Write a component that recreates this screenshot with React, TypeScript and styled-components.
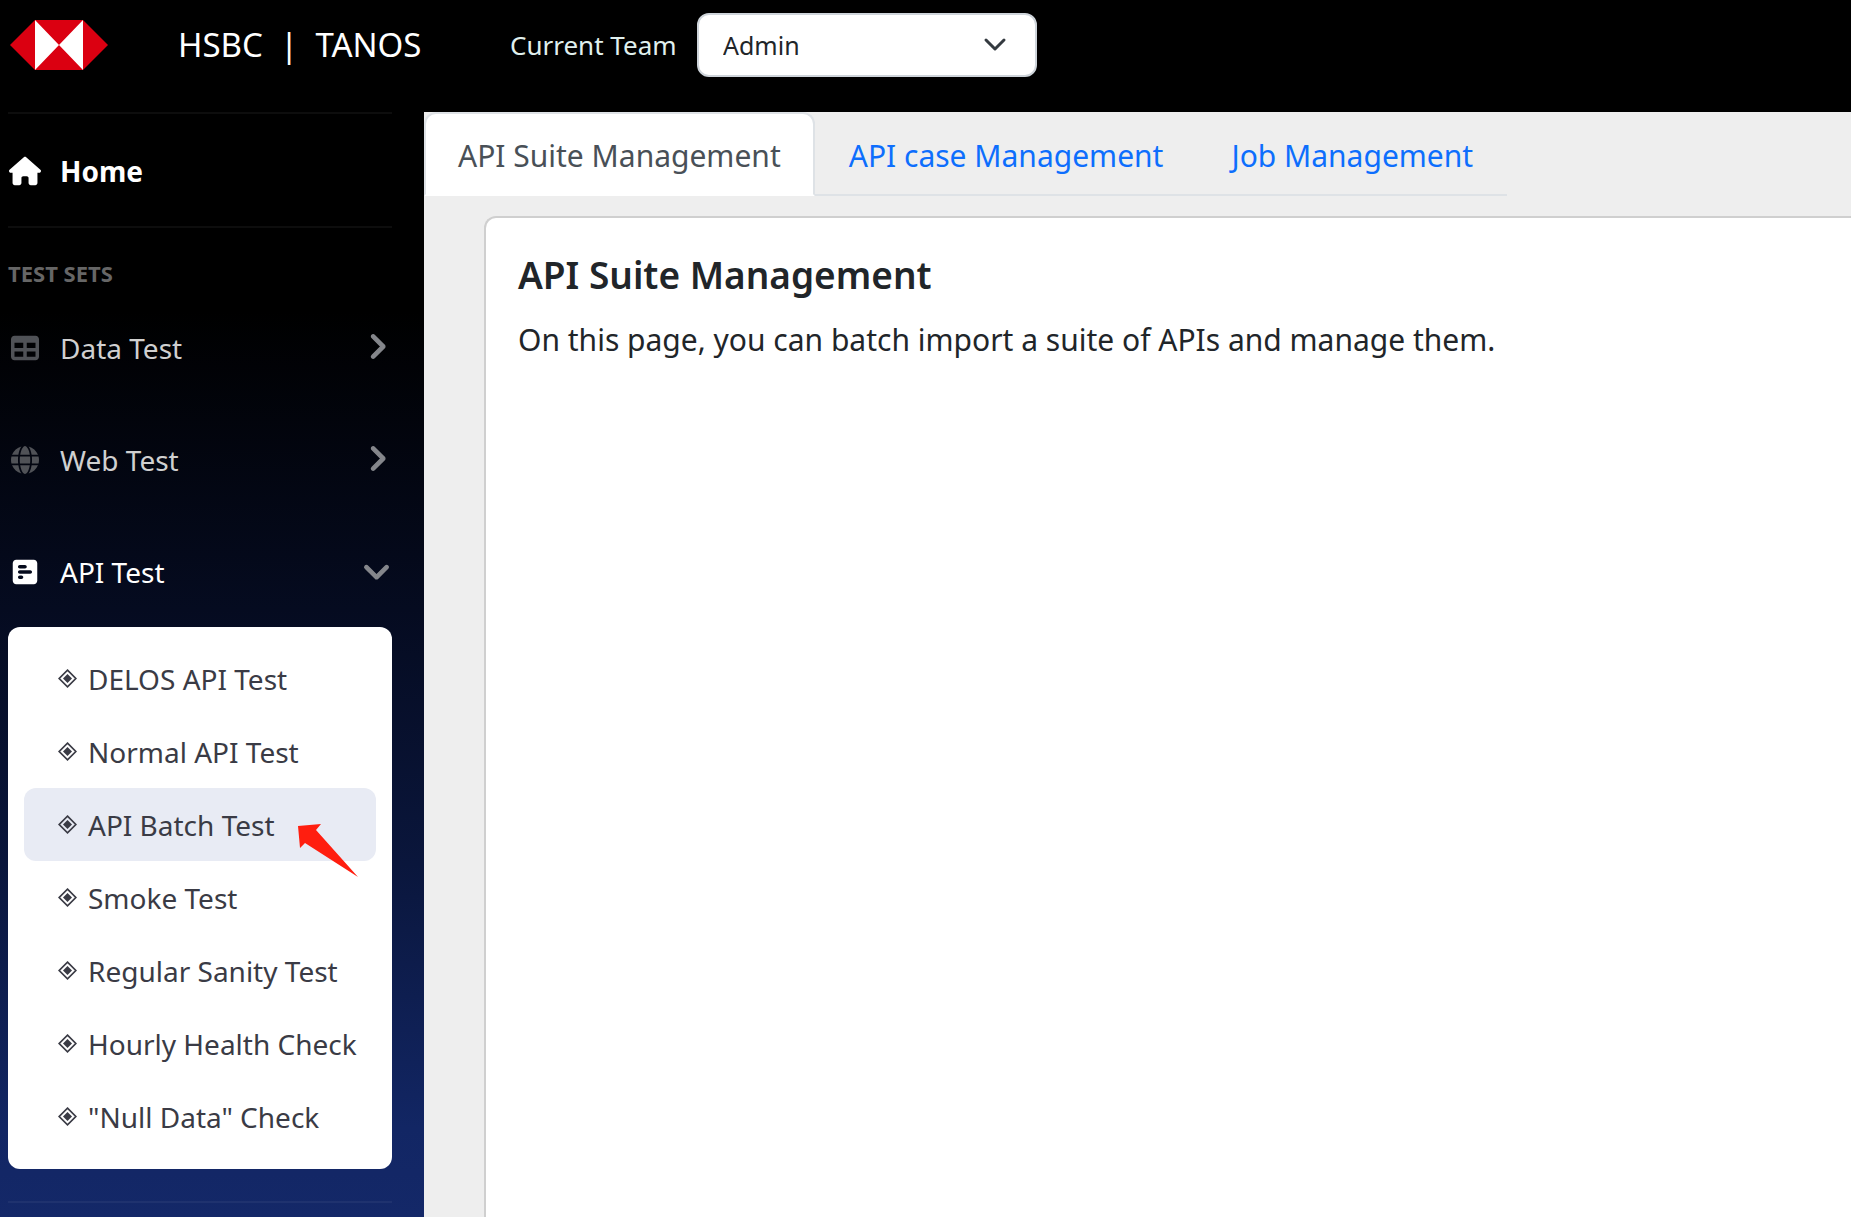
import React, { useState } from "react";
import styled, { createGlobalStyle } from "styled-components";
import { FaHouse, FaTable, FaGlobe, FaSquarePollHorizontal, FaChevronRight, FaChevronDown } from "react-icons/fa6";

const GlobalStyle = createGlobalStyle`
  *, *::before, *::after { box-sizing: border-box; }
  body {
    margin: 0;
    background: #000;
    color: #212529;
    font-family: "Noto Sans", "Open Sans", sans-serif;
    font-size: 30px;
    line-height: 48px;
  }
`;

const Page = styled.div`
  display: flex;
  flex-direction: column;
  height: 100vh;
  overflow: hidden;
`;

const TopBar = styled.header`
  display: flex;
  flex: none;
  align-items: flex-start;
  height: 112px;
  padding: 13px 10px;
  background: #000;
`;

const LogoLink = styled.a`
  display: flex;
  align-items: center;
  height: 64px;
  width: 168px;
`;

const Brand = styled.div`
  width: 332px;
  color: #fff;
  font-size: 33px;
  line-height: 64px;
  white-space: pre;
`;

const TeamLabel = styled.label`
  width: 187px;
  color: #e0f0ee;
  font-size: 26px;
  line-height: 64px;
  white-space: nowrap;
`;

const SelectWrap = styled.span`
  position: relative;
  display: flex;
  width: 340px;
`;

const TeamSelect = styled.select`
  appearance: none;
  width: 100%;
  height: 64px;
  padding: 0 24px;
  border: 2px solid #ced4da;
  border-radius: 12px;
  background: #fff;
  color: #212529;
  font: inherit;
  font-size: 25px;
`;

const SelectArrow = styled.svg`
  position: absolute;
  right: 30px;
  top: 20px;
  pointer-events: none;
`;

const Body = styled.div`
  display: flex;
  flex: 1;
  min-height: 0;
`;

const Sidebar = styled.nav`
  display: flex;
  flex: none;
  flex-direction: column;
  width: 424px;
  padding: 0 32px 0 8px;
  background: linear-gradient(180deg, #000 18%, #050b20 45%, #0a163c 68%, #122664 92%, #142868 100%);
`;

const Divider = styled.hr`
  flex: none;
  width: 100%;
  height: 2px;
  margin: 0;
  border: 0;
  background: rgba(255, 255, 255, 0.05);
`;

const NavLink = styled.a<{ $bold?: boolean; $active?: boolean }>`
  display: flex;
  flex: none;
  align-items: center;
  height: 112px;
  padding-top: 2px;
  color: ${(p) => (p.$active ? "#fff" : "#d0d0d0")};
  font-size: 28px;
  font-weight: ${(p) => (p.$bold ? 700 : 400)};
  text-decoration: none;
`;

const NavIcon = styled.span<{ $active?: boolean }>`
  display: flex;
  justify-content: center;
  width: 34px;
  margin-right: 18px;
  color: ${(p) => (p.$active ? "#fff" : "#505257")};
`;

const Chevron = styled.span`
  display: flex;
  justify-content: center;
  width: 32px;
  margin-left: auto;
  padding-bottom: 4px;
  color: #85878c;

  svg {
    stroke-width: 24px;
  }
`;

const SectionTitle = styled.h2`
  margin: 28px 0 0;
  color: #666;
  font-size: 22px;
  font-weight: 700;
  line-height: 35px;
  text-transform: uppercase;
`;

const SubMenu = styled.ul`
  flex: none;
  margin: 0 0 32px;
  padding: 15px 16px 16px;
  border-radius: 12px;
  background: #fff;
  list-style: none;
`;

const SubLink = styled.a<{ $active?: boolean }>`
  position: relative;
  display: flex;
  align-items: center;
  gap: 11px;
  height: 73px;
  padding-left: 34px;
  border-radius: 12px;
  background: ${(p) => (p.$active ? "#e8ebf4" : "transparent")};
  color: #3a3b45;
  font-size: 28px;
  text-decoration: none;
  white-space: nowrap;
`;

const Pointer = styled.svg`
  position: absolute;
  left: 274px;
  top: 36px;
  z-index: 1;
`;

const Main = styled.main`
  display: flex;
  flex: 1;
  flex-direction: column;
  align-items: flex-start;
  min-width: 0;
  overflow: hidden;
  background: #eee;
`;

const Tabs = styled.div`
  display: flex;
  flex: none;
  border-bottom: 2px solid #dee2e6;
`;

const Tab = styled.button<{ $active?: boolean }>`
  height: 84px;
  margin-bottom: -2px;
  padding: 3px 32px 0;
  border: 2px solid;
  border-color: ${(p) => (p.$active ? "#dee2e6 #dee2e6 #fff" : "transparent")};
  border-radius: 12px 12px 0 0;
  background: ${(p) => (p.$active ? "#fff" : "transparent")};
  color: ${(p) => (p.$active ? "#495057" : "#0d6efd")};
  font: inherit;
  white-space: nowrap;
`;

const Card = styled.section`
  flex: 1;
  align-self: stretch;
  margin: 20px 0 0 60px;
  padding: 32px;
  border: 2px solid #cfcfcf;
  border-width: 2px 0 0 2px;
  border-radius: 12px 0 0 0;
  background: #fff;
`;

const CardTitle = styled.h1`
  margin: 0 0 16px;
  font-size: 37px;
  font-weight: 600;
  line-height: 50px;
`;

const CardText = styled.p`
  margin: 0;
`;

const subItems = [
  "DELOS API Test",
  "Normal API Test",
  "API Batch Test",
  "Smoke Test",
  "Regular Sanity Test",
  "Hourly Health Check",
  '"Null Data" Check',
];

const tabs = ["API Suite Management", "API case Management", "Job Management"];

function Logo() {
  return (
    <svg width="98" height="50" viewBox="0 0 98 50" role="img" aria-label="HSBC">
      <path d="M0 25 25 0H73L98 25 73 50H25Z" fill="#db0011" />
      <path d="M25 0 49 25 25 50ZM73 0 49 25 73 50Z" fill="#fff" />
    </svg>
  );
}

function Diamond() {
  return (
    <svg width="19" height="19" viewBox="0 0 19 19" aria-hidden="true">
      <path d="M9.5 1.2 17.8 9.5 9.5 17.8 1.2 9.5Z" fill="none" stroke="#3a3b45" strokeWidth="1.7" />
      <path d="M9.5 5 14 9.5 9.5 14 5 9.5Z" fill="#3a3b45" />
    </svg>
  );
}

export default function App() {
  const [tab, setTab] = useState(tabs[0]);
  return (
    <Page>
      <GlobalStyle />
      <TopBar>
        <LogoLink href="#"><Logo /></LogoLink>
        <Brand>{"HSBC  |  TANOS"}</Brand>
        <TeamLabel htmlFor="team">Current Team</TeamLabel>
        <SelectWrap>
          <TeamSelect id="team" defaultValue="Admin">
            <option>Admin</option>
          </TeamSelect>
          <SelectArrow width="24" height="24" viewBox="0 0 24 24" aria-hidden="true">
            <path d="M3 7l9 9 9-9" fill="none" stroke="#343a40" strokeWidth="3" strokeLinecap="round" strokeLinejoin="round" />
          </SelectArrow>
        </SelectWrap>
      </TopBar>
      <Body>
        <Sidebar>
          <Divider />
          <NavLink href="#" $bold $active>
            <NavIcon $active><FaHouse size={32} /></NavIcon>
            Home
          </NavLink>
          <Divider />
          <SectionTitle>Test Sets</SectionTitle>
          <NavLink href="#">
            <NavIcon><FaTable size={28} /></NavIcon>
            Data Test
            <Chevron><FaChevronRight size={27} /></Chevron>
          </NavLink>
          <NavLink href="#">
            <NavIcon><FaGlobe size={28} /></NavIcon>
            Web Test
            <Chevron><FaChevronRight size={27} /></Chevron>
          </NavLink>
          <NavLink href="#" $active>
            <NavIcon $active><FaSquarePollHorizontal size={28} /></NavIcon>
            API Test
            <Chevron><FaChevronDown size={27} /></Chevron>
          </NavLink>
          <SubMenu>
            {subItems.map((name) => (
              <li key={name}>
                <SubLink href="#" $active={name === "API Batch Test"}>
                  <Diamond />
                  {name}
                  {name === "API Batch Test" && (
                    <Pointer width="60" height="53" viewBox="0 0 60 53" aria-hidden="true">
                      <path d="M0 2 23 0 18 6 60 53 7 19 2 24Z" fill="#ff1e0f" />
                    </Pointer>
                  )}
                </SubLink>
              </li>
            ))}
          </SubMenu>
          <Divider />
        </Sidebar>
        <Main>
          <Tabs role="tablist">
            {tabs.map((name) => (
              <Tab key={name} role="tab" aria-selected={name === tab} $active={name === tab} onClick={() => setTab(name)}>
                {name}
              </Tab>
            ))}
          </Tabs>
          <Card>
            <CardTitle>API Suite Management</CardTitle>
            <CardText>On this page, you can batch import a suite of APIs and manage them.</CardText>
          </Card>
        </Main>
      </Body>
    </Page>
  );
}
